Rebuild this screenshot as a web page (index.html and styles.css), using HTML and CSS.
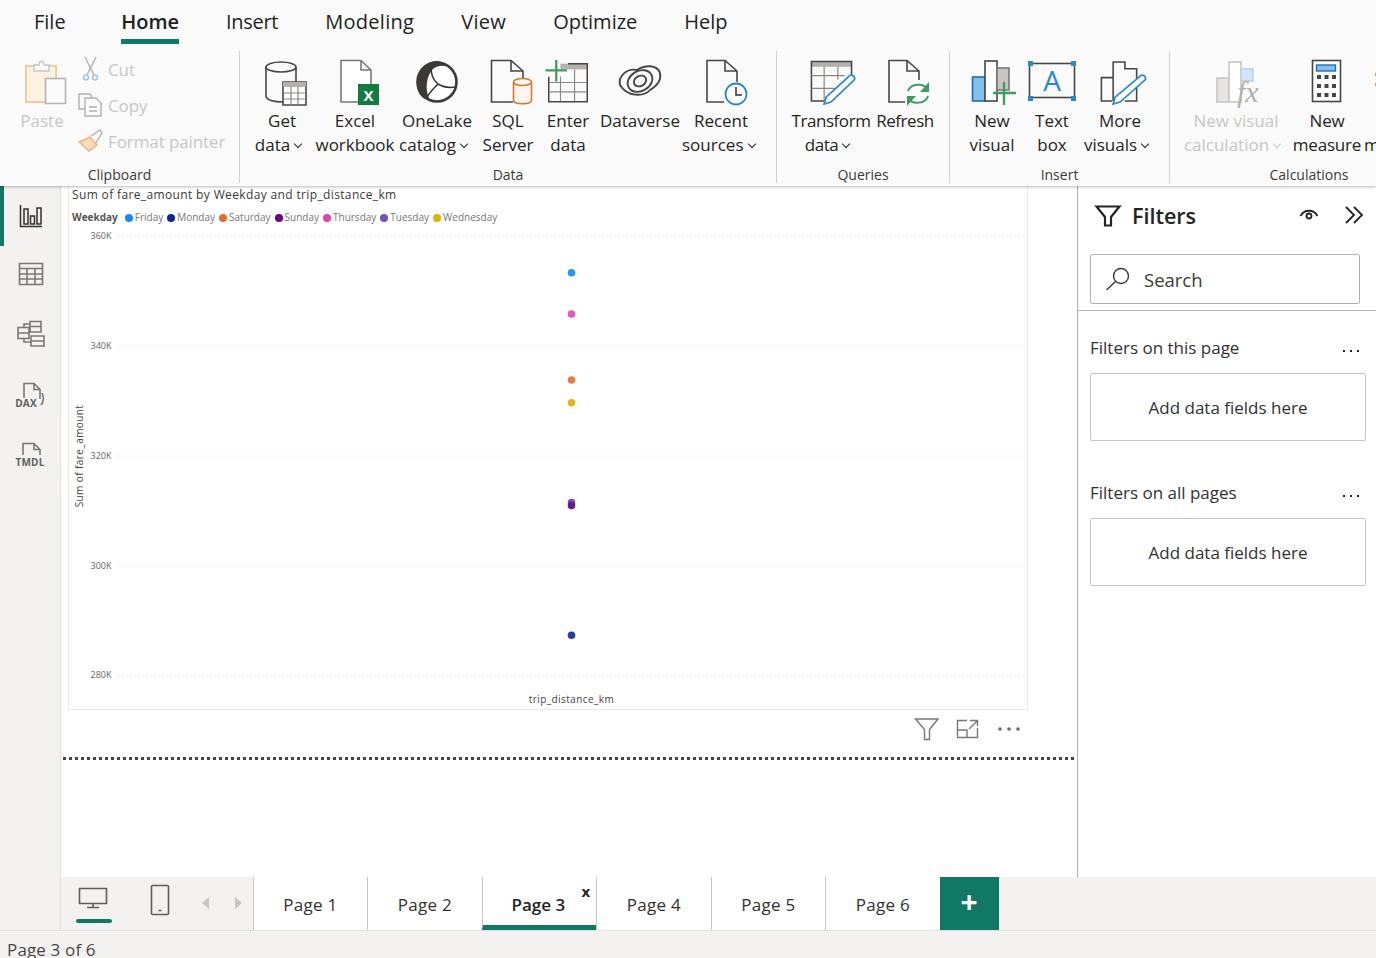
FILE: index.html
```html
<!DOCTYPE html>
<html lang="en">
<head>
  <meta charset="UTF-8">
  <title>Power BI Desktop</title>
  <link rel="stylesheet" href="styles.css">
</head>
<body>
  <header class="ribbon">
    <nav class="tabs">
      <span class="tab tab-file">File</span>
      <span class="tab active">Home</span>
      <span class="tab tab-tight">Insert</span>
      <span class="tab tab-wide">Modeling</span>
      <span class="tab tab-wide">View</span>
      <span class="tab">Optimize</span>
      <span class="tab">Help</span>
    </nav>
    <div class="groups">
      <section class="group group-clipboard">
        <div class="items">
          <div class="item disabled w60">
            <svg class="big" viewBox="12 59 60 46">
              <path class="paste-fill" d="M28 68H54V100H28Z"/>
              <path class="paste-board" d="M34 66H26V102H45M49 66H56V78"/>
              <path class="paste-clip" d="M34 71V65H39C39 60 44 60 44 65H49V71Z"/>
              <rect class="paste-paper" x="45.5" y="78.5" width="20" height="25"/>
            </svg>
            <div class="label">Paste</div>
          </div>
          <div class="small-col">
            <div class="small-row disabled">
              <svg class="small" viewBox="78 56 26 26">
                <path class="gray-line" d="M85 57L94 75M96 57L87 75"/>
                <circle class="blue-line" cx="86" cy="77.500" r="2.500"/>
                <circle class="blue-line" cx="95" cy="77.500" r="2.500"/>
              </svg>
              <span>Cut</span>
            </div>
            <div class="small-row disabled">
              <svg class="small" viewBox="78 92 26 26">
                <path class="gray-line" d="M85 109H79V94H90L92 97"/>
                <path class="gray-line" d="M85 98H96L101 103V116H85Z"/>
                <path class="gray-line" d="M89 107H97M89 111H97"/>
              </svg>
              <span>Copy</span>
            </div>
            <div class="small-row disabled">
              <svg class="small" viewBox="78 129 26 26">
                <path class="brush" d="M79 142L90 137L97 145L89 151Z"/>
                <path class="gray-line" d="M91 136L100 130L102 133L96 143"/>
              </svg>
              <span>Format painter</span>
            </div>
          </div>
        </div>
        <div class="group-name">Clipboard</div>
      </section>

      <section class="group group-data">
        <div class="items">
          <div class="item w64">
            <svg class="big" viewBox="250 59 64 46">
              <path class="ln" d="M266 67V96C266 100 274 102 283 102M296 67V82"/>
              <ellipse class="ln" cx="281" cy="67" rx="15" ry="5"/>
              <path class="ln-w" d="M283 82H306V105H283Z"/>
              <rect class="table-head" x="283" y="82" width="23" height="5"/>
              <path class="ln-thin" d="M283 93H306M283 99H306M291 87V105M298 87V105"/>
            </svg>
            <div class="label">Get<br>data<i class="chev"></i></div>
          </div>
          <div class="item w82">
            <svg class="big" viewBox="314 59 82 46">
              <path class="ln-gray" d="M341 60.5H361L371 70V102H341ZM361 60.5V70H371"/>
              <rect class="xl" x="358" y="84" width="21" height="21"/>
              <text class="xl-x" x="368.5" y="100.5">X</text>
            </svg>
            <div class="label">Excel<br>workbook</div>
          </div>
          <div class="item w82">
            <svg class="big" viewBox="396 59 82 46">
              <circle class="lake-ring" cx="437" cy="82" r="19.500"/>
              <path class="solid" d="M431 62C418 66 414 80 419 93C422 98 425 100 429 98C425 90 426 76 433 69C438 65 445 65 450 68C444 61 437 60 431 62Z"/>
              <path class="ln-dark" d="M431 67C431 75 434 81 438 84C443 87 449 88 455 87M438 84C434 88 430 92 427 97"/>
            </svg>
            <div class="label">OneLake<br>catalog<i class="chev"></i></div>
          </div>
          <div class="item w60">
            <svg class="big" viewBox="478 59 60 46">
              <path class="ln" d="M513 102H491.500V60.500H511L523 71V78M511 60.500V71H523"/>
              <path class="orange" d="M513.500 82V100C513.500 105 531.500 105 531.500 100V82"/>
              <ellipse class="orange" cx="522.500" cy="82" rx="9" ry="3.500"/>
            </svg>
            <div class="label">SQL<br>Server</div>
          </div>
          <div class="item w60">
            <svg class="big" viewBox="538 56 60 49">
              <rect class="table-head" x="560" y="61" width="29" height="6"/>
              <path class="ln" d="M568 61H588.500V101.500H547.500V75"/>
              <path class="ln-thin" d="M548 81H588M548 91H588M560 75V101M575 67V101"/>
              <path class="green-plus" d="M544 68H567M555.500 57V80"/>
            </svg>
            <div class="label">Enter<br>data</div>
          </div>
          <div class="item w84">
            <svg class="big" viewBox="598 59 84 46">
              <path class="ln-round" d="M620 85C618 76 627 68 637 70C644 65 657 64 660 73C662 82 655 87 650 90C644 97 627 97 620 85Z"/>
              <ellipse class="ln-round" cx="640" cy="81" rx="13" ry="10" transform="rotate(-30 640 81)"/>
              <ellipse class="ln-round" cx="640" cy="81" rx="6.500" ry="5" transform="rotate(-30 640 81)"/>
            </svg>
            <div class="label">Dataverse</div>
          </div>
          <div class="item w78">
            <svg class="big" viewBox="682 59 78 46">
              <path class="ln" d="M724 102H707V60.500H725L737 71V82M725 60.500V71H737"/>
              <circle class="clock" cx="736" cy="94" r="10.500"/>
              <path class="ln-dark" d="M736 87V95H742"/>
            </svg>
            <div class="label">Recent<br>sources<i class="chev"></i></div>
          </div>
        </div>
        <div class="group-name">Data</div>
      </section>

      <section class="group group-queries">
        <div class="items">
          <div class="item w84 tight">
            <svg class="big" viewBox="789 59 84 47">
              <rect class="table-head" x="811" y="61" width="41" height="6"/>
              <path class="ln" d="M824 102H811V61.500H852V76"/>
              <path class="ln-thin" d="M811 76H845M811 89H835M824 67V102M838 67V80"/>
              <path class="pencil" d="M849 77C851 74 856 76 855 80L831 103L824 105L826 98Z"/>
            </svg>
            <div class="label">Transform<br>data<i class="chev"></i></div>
          </div>
          <div class="item w64 tight">
            <svg class="big" viewBox="873 59 64 46">
              <path class="ln" d="M905 102H889V60.500H907L919 71V80M907 60.500V71H919"/>
              <path class="refresh" d="M908 91C911 83 924 83 927 89M928 96C926 104 912 105 908 98"/>
              <path class="refresh-tip" d="M929 82V92H920ZM907 106V96H916Z"/>
            </svg>
            <div class="label">Refresh</div>
          </div>
        </div>
        <div class="group-name">Queries</div>
      </section>

      <section class="group group-insert">
        <div class="items">
          <div class="item w60">
            <svg class="big" viewBox="962 59 60 46">
              <rect class="bar-blue" x="972.500" y="77" width="12.500" height="24"/>
              <rect class="bar-white" x="985" y="61" width="12" height="40"/>
              <rect class="bar-gray" x="997" y="68" width="12" height="22"/>
              <path class="green-plus" d="M993 93H1016M1004 82V105"/>
            </svg>
            <div class="label">New<br>visual</div>
          </div>
          <div class="item w60">
            <svg class="big" viewBox="1022 59 60 46">
              <rect class="ln" x="1029.500" y="63.500" width="45" height="34"/>
              <rect class="handle" x="1028" y="61" width="5" height="5"/>
              <rect class="handle" x="1071" y="61" width="5" height="5"/>
              <rect class="handle" x="1028" y="96" width="5" height="5"/>
              <rect class="handle" x="1071" y="96" width="5" height="5"/>
              <text class="box-a" x="1052" y="91">A</text>
            </svg>
            <div class="label">Text<br>box</div>
          </div>
          <div class="item w76">
            <svg class="big" viewBox="1082 59 76 47">
              <path class="ln" d="M1112 102H1101V78H1113M1113 102V62H1125V69H1137V102H1125"/>
              <path class="pencil" d="M1140 77C1142 74 1147 76 1146 80L1120 103L1113 105L1115 98Z"/>
            </svg>
            <div class="label">More<br>visuals<i class="chev"></i></div>
          </div>
        </div>
        <div class="group-name">Insert</div>
      </section>

      <section class="group group-calc">
        <div class="items">
          <div class="item disabled w108">
            <svg class="big" viewBox="1182 59 108 46">
              <rect class="bar-off" x="1217" y="78" width="12" height="24"/>
              <rect class="bar-white-off" x="1229" y="62" width="12" height="40"/>
              <rect class="bar-blue-off" x="1241" y="69" width="12" height="12"/>
              <text class="fx" x="1237" y="102">fx</text>
            </svg>
            <div class="label">New visual<br>calculation<i class="chev"></i></div>
          </div>
          <div class="item w74 measure">
            <svg class="big" viewBox="1290 59 74 46">
              <rect class="ln-w" x="1312.500" y="60.500" width="28" height="41"/>
              <rect class="calc-screen" x="1316.500" y="65" width="19" height="6"/>
              <path class="calc-keys" d="M1317 75h4v4h-4zM1324.500 75h4v4h-4zM1332 75h4v4h-4zM1317 84h4v4h-4zM1324.500 84h4v4h-4zM1332 84h4v4h-4zM1317 93h4v4h-4zM1324.500 93h4v4h-4zM1332 93h4v4h-4z"/>
            </svg>
            <div class="label">New<br>measure</div>
          </div>
          <div class="item w70">
            <svg class="big" viewBox="1364 59 70 46">
              <path class="orange" d="M1376 73V76M1376 83V86"/>
            </svg>
            <div class="label">Quick<br>measure</div>
          </div>
        </div>
        <div class="group-name">Calculations</div>
      </section>
    </div>
  </header>

  <div class="body">
    <aside class="rail">
      <div class="rail-btn selected">
        <svg viewBox="0 0 26 26">
          <path class="rail-dark" d="M2.500 2V23.500H24M6 6H10V21H6ZM12.500 13H16.500V21H12.500ZM19 5H23V21H19Z"/>
        </svg>
      </div>
      <div class="rail-btn">
        <svg viewBox="0 0 26 26">
          <path class="rail-line" d="M1.500 2.500H24.500V23.500H1.500ZM1.500 7.500H24.500M1.500 13H24.500M1.500 18H24.500M9 7.500V23.500M17 7.500V23.500"/>
        </svg>
      </div>
      <div class="rail-btn">
        <svg viewBox="0 0 30 30">
          <path class="rail-line" d="M14 2.500H25V13H14ZM14 7.500H25M15 17H28V27H15ZM15 22H28M2 8.500H13V19.500H2ZM2 14H13M14 13L12 13M8 8.500V5H14M8 19.500V23H15"/>
        </svg>
      </div>
      <div class="rail-btn rail-file rail-dax">
        <svg viewBox="0 0 30 30">
          <path class="rail-line" d="M8 17V2.500H18L24 8.500V18M18 2.500V8.500H24M26 12C28 16 28 20 25 24"/>
        </svg>
        <span class="rail-text">DAX</span>
      </div>
      <div class="rail-btn rail-file">
        <svg viewBox="0 0 30 30">
          <path class="rail-line" d="M7 14V2.500H18L24 8.500V14M18 2.500V8.500H24"/>
        </svg>
        <span class="rail-text">TMDL</span>
      </div>
    </aside>

    <div class="workspace">
      <div class="work-row">
        <main class="canvas">
          <div class="visual">
            <div class="visual-title">Sum of fare_amount by Weekday and trip_distance_km</div>
            <div class="legend">
              <b>Weekday</b>
              <span><i class="dot c-friday"></i>Friday</span>
              <span><i class="dot c-monday"></i>Monday</span>
              <span><i class="dot c-saturday"></i>Saturday</span>
              <span><i class="dot c-sunday"></i>Sunday</span>
              <span><i class="dot c-thursday"></i>Thursday</span>
              <span><i class="dot c-tuesday"></i>Tuesday</span>
              <span><i class="dot c-wednesday"></i>Wednesday</span>
            </div>
            <svg class="plot" viewBox="69 226 958 483">
              <path class="grid" d="M118 236.500H1026M118 346H1026M118 456H1026M118 566H1026M118 675.500H1026"/>
              <text class="tick" x="111.500" y="239">360K</text>
              <text class="tick" x="111.500" y="349">340K</text>
              <text class="tick" x="111.500" y="459">320K</text>
              <text class="tick" x="111.500" y="569">300K</text>
              <text class="tick" x="111.500" y="678">280K</text>
              <text class="axis-name" transform="translate(83 456) rotate(-90)">Sum of fare_amount</text>
              <text class="axis-name" x="571.500" y="703">trip_distance_km</text>
              <circle class="pt-friday" cx="571.500" cy="272.800" r="3.800"/>
              <circle class="pt-thursday" cx="571.500" cy="314" r="3.800"/>
              <circle class="pt-saturday" cx="571.500" cy="380" r="3.800"/>
              <circle class="pt-wednesday" cx="571.500" cy="402.800" r="3.800"/>
              <circle class="pt-tuesday" cx="571.500" cy="502.500" r="3.800"/>
              <circle class="pt-sunday" cx="571.500" cy="505.500" r="3.800"/>
              <circle class="pt-monday" cx="571.500" cy="635.300" r="3.800"/>
            </svg>
          </div>
          <div class="visual-tools">
            <svg class="tool-funnel" viewBox="0 0 26 24">
              <path class="tool-line" d="M1.500 2H24L15.500 12.500V22.500H10.500V12.500Z"/>
            </svg>
            <svg class="tool-focus" viewBox="0 0 24 20">
              <path class="tool-line" d="M11 1.500H1.500V18.500H21.500V9M1.500 11H11V18.500M14 1.500H21.500V7M21 2L13 10"/>
            </svg>
            <svg class="tool-more" viewBox="0 0 24 6">
              <circle class="tool-dot" cx="3" cy="3" r="1.800"/>
              <circle class="tool-dot" cx="12" cy="3" r="1.800"/>
              <circle class="tool-dot" cx="21" cy="3" r="1.800"/>
            </svg>
          </div>
          <div class="page-end"></div>
        </main>

        <aside class="filters">
          <div class="filters-head">
            <svg class="funnel" viewBox="0 0 26 22">
              <path d="M1.500 1.500H24.500L16 12V20.500H10V12Z"/>
            </svg>
            <span class="filters-title">Filters</span>
            <svg class="eye" viewBox="0 0 20 14">
              <path d="M1.500 9C5 2 15 2 18.500 9"/>
              <circle cx="10" cy="9" r="2.500"/>
            </svg>
            <svg class="collapse" viewBox="0 0 20 18">
              <path d="M2 1L10 9L2 17M10 1L18 9L10 17"/>
            </svg>
          </div>
          <div class="search">
            <svg viewBox="0 0 26 26">
              <circle cx="16" cy="10" r="7.500"/>
              <path d="M10.500 15.500L1.500 24"/>
            </svg>
            <span>Search</span>
          </div>
          <div class="filter-section">
            <div class="section-head">
              <span>Filters on this page</span>
              <span class="dots"><i></i><i></i><i></i></span>
            </div>
            <div class="dropzone">Add data fields here</div>
          </div>
          <div class="filter-section">
            <div class="section-head">
              <span>Filters on all pages</span>
              <span class="dots"><i></i><i></i><i></i></span>
            </div>
            <div class="dropzone">Add data fields here</div>
          </div>
        </aside>
      </div>

      <div class="pagebar">
        <div class="view-tools">
          <div class="view-btn on">
            <svg class="desktop" viewBox="0 0 30 22">
              <path d="M1.500 1.500H28.500V16.500H1.500ZM15 16.500V20.500M9 20.500H21"/>
            </svg>
          </div>
          <div class="view-btn view-phone">
            <svg class="phone" viewBox="0 0 20 32">
              <path d="M2.500 1.500H17.500C18 1.500 18.500 2 18.500 2.500V29.500C18.500 30 18 30.500 17.500 30.500H2.500C2 30.500 1.500 30 1.500 29.500V2.500C1.500 2 2 1.500 2.500 1.500ZM8.500 26.500H11.500"/>
            </svg>
          </div>
          <i class="arrow arrow-left"></i>
          <i class="arrow arrow-right"></i>
        </div>
        <div class="page-tab">Page 1</div>
        <div class="page-tab">Page 2</div>
        <div class="page-tab current">Page 3<span class="close">x</span></div>
        <div class="page-tab">Page 4</div>
        <div class="page-tab">Page 5</div>
        <div class="page-tab">Page 6</div>
        <div class="add-page">+</div>
      </div>
    </div>
  </div>

  <footer class="status">Page 3 of 6</footer>
</body>
</html>
```

FILE: styles.css
```css
* {
  box-sizing: border-box;
}
html, body {
  height: 100%;
}
body {
  margin: 0;
  height: 958px;
  overflow: hidden;
  display: flex;
  flex-direction: column;
  font-family: 'Open Sans', 'Noto Sans', sans-serif;
  color: #252423;
  background: #fff;
}
svg {
  display: block;
  overflow: visible;
}

/* ribbon */
.ribbon {
  height: 186px;
  flex: none;
  background: #fafafa;
  box-shadow: 0 1px 3px rgba(0, 0, 0, 0.28);
  position: relative;
  z-index: 2;
  overflow: hidden;
}
.tabs {
  display: flex;
  gap: 47px;
  height: 44px;
  margin: 0 0 7px 34px;
  font-size: 20px;
  color: #201f1e;
}
.tab {
  padding-top: 8px;
  line-height: 28px;
  height: 44px;
}
.tab-file {
  margin-right: 8.5px;
}
.tab-tight {
  letter-spacing: -0.3px;
}
.tab-wide {
  letter-spacing: 0.3px;
}
.tab.active {
  font-weight: 600;
  border-bottom: 5px solid #117865;
}
.groups {
  display: flex;
  height: 132px;
}
.group {
  flex: none;
  display: flex;
  flex-direction: column;
  justify-content: space-between;
  border-right: 1px solid #d2d0ce;
  padding-top: 8px;
}
.group-clipboard { width: 240px; padding-left: 12px; }
.group-data { width: 537px; padding-left: 10px; }
.group-queries { width: 173px; padding-left: 12px; }
.group-insert { width: 220px; padding-left: 12px; }
.group-calc { width: 278px; padding-left: 12px; border-right: 0; }
.items {
  display: flex;
}
.item {
  flex: none;
  font-size: 17px;
  line-height: 24px;
  text-align: center;
  white-space: nowrap;
}
.tight {
  letter-spacing: -0.45px;
}
.measure {
  letter-spacing: -0.2px;
}
.w60 { width: 60px; }
.w64 { width: 64px; }
.w70 { width: 70px; }
.w74 { width: 74px; }
.w76 { width: 76px; }
.w78 { width: 78px; }
.w82 { width: 82px; }
.w84 { width: 84px; }
.w108 { width: 108px; }
.big {
  width: 100%;
  height: 46px;
}
.label {
  margin-top: 4px;
}
.disabled {
  color: #c8c6c4;
}
.chev {
  display: inline-block;
  width: 6px;
  height: 6px;
  margin: 0 8px 4px 5px;
  border-right: 1.5px solid currentColor;
  border-bottom: 1.5px solid currentColor;
  transform: rotate(45deg);
}
.group-name {
  font-size: 14px;
  line-height: 20px;
  text-align: center;
  color: #3b3a39;
  margin-bottom: -2px;
  padding-right: 12px;
}
.group-data .group-name { padding-right: 10px; }
.small-col {
  margin-top: -8px;
  margin-left: 6px;
}
.small-row {
  height: 36.3px;
  display: flex;
  align-items: center;
  gap: 4px;
  font-size: 17px;
  letter-spacing: -0.1px;
  white-space: nowrap;
}
.small {
  width: 26px;
  height: 26px;
  flex: none;
}

/* ribbon icon strokes */
.ln { fill: none; stroke: #484644; stroke-width: 1.6; }
.ln-w { fill: #fff; stroke: #484644; stroke-width: 1.6; }
.ln-gray { fill: #fff; stroke: #7a7874; stroke-width: 1.6; }
.ln-thin { fill: none; stroke: #8a8886; stroke-width: 1.2; }
.ln-dark { fill: none; stroke: #333; stroke-width: 1.5; }
.ln-round { fill: none; stroke: #484644; stroke-width: 1.9; }
.table-head { fill: #b3b0ad; }
.xl { fill: #107c41; }
.xl-x { fill: #fff; font: 700 15px 'Open Sans', sans-serif; text-anchor: middle; }
.solid { fill: #3b3a39; }
.lake-ring { fill: #fff; stroke: #3b3a39; stroke-width: 2.6; }
.orange { fill: #fdf6ee; stroke: #d9782d; stroke-width: 1.6; }
.green-plus { fill: none; stroke: #3f9c62; stroke-width: 2.4; }
.clock { fill: #fff; stroke: #2b88c8; stroke-width: 1.8; }
.pencil { fill: #fff; stroke: #2b88d8; stroke-width: 1.8; }
.refresh { fill: none; stroke: #3f9c62; stroke-width: 2; }
.refresh-tip { fill: #3f9c62; }
.bar-blue { fill: #83beec; stroke: #1e6fb0; stroke-width: 1.6; }
.bar-white { fill: #fff; stroke: #484644; stroke-width: 1.6; }
.bar-gray { fill: #c8c6c4; stroke: #7a7874; stroke-width: 1.6; }
.handle { fill: #2b88c8; }
.box-a { fill: #2b88d8; font: 400 28px 'Open Sans', sans-serif; text-anchor: middle; }
.bar-off { fill: #e6e5e3; stroke: #c8c6c4; stroke-width: 1.6; }
.bar-white-off { fill: #fff; stroke: #c8c6c4; stroke-width: 1.6; }
.bar-blue-off { fill: #d3e5f5; stroke: #b8d3ea; stroke-width: 1.6; }
.fx { fill: #b3b0ad; font: italic 400 30px 'Liberation Serif', serif; }
.calc-screen { fill: #83beec; stroke: #1e6fb0; stroke-width: 1.4; }
.calc-keys { fill: #484644; }
.paste-board { fill: none; stroke: #f3c998; stroke-width: 2; }
.paste-fill { fill: #fdf1e0; }
.paste-clip { fill: #fafafa; stroke: #c8c6c4; stroke-width: 1.4; }
.paste-paper { fill: #fafafa; stroke: #b3b0ad; stroke-width: 1.5; }
.gray-line { fill: none; stroke: #b3b0ad; stroke-width: 1.4; }
.blue-line { fill: none; stroke: #9cc6e6; stroke-width: 1.4; }
.brush { fill: #f7dcbc; stroke: #f0b27a; stroke-width: 1.4; }

/* page body */
.body {
  flex: 1;
  min-height: 0;
  display: flex;
}
.rail {
  width: 61px;
  flex: none;
  background: #f3f2f1;
  border-right: 1px solid #e1dfdd;
}
.rail-btn {
  height: 60px;
  padding-left: 1px;
  display: flex;
  align-items: center;
  justify-content: center;
  position: relative;
}
.rail-btn:nth-child(2) {
  height: 56px;
}
.rail-btn:nth-child(3) {
  height: 64px;
}
.rail-btn svg {
  width: 26px;
  height: 26px;
}
.rail-btn.selected {
  border-left: 4px solid #117865;
  padding: 0 3px 0 0;
}
.rail-btn:nth-child(3) svg {
  width: 30px;
  height: 30px;
}
.rail-file svg {
  width: 30px;
  height: 30px;
}
.rail-text {
  position: absolute;
  left: 0;
  right: 0;
  top: 30px;
  text-align: center;
  font-size: 10px;
  line-height: 12px;
  font-weight: 700;
  color: #605e5c;
  letter-spacing: 0.2px;
  background: #f3f2f1;
}
.rail-dax .rail-text {
  top: 31px;
  left: 15px;
  right: auto;
  width: 22px;
  background: none;
}
.rail-dark { fill: none; stroke: #323130; stroke-width: 1.5; }
.rail-line { fill: none; stroke: #7a7874; stroke-width: 1.6; }

.workspace {
  flex: 1;
  min-width: 0;
  display: flex;
  flex-direction: column;
}
.work-row {
  flex: 1;
  min-height: 0;
  display: flex;
}

/* report canvas */
.canvas {
  flex: 1;
  min-width: 0;
  padding-left: 7px;
  background: #fff;
}
.visual {
  width: 960px;
  height: 524px;
  border: 1px solid #e8e8e8;
  border-top: 0;
  display: flex;
  flex-direction: column;
}
.visual-title {
  font-size: 12px;
  line-height: 18px;
  letter-spacing: 0.36px;
  color: #3b3a39;
  padding: 0 0 0 3px;
}
.legend {
  display: flex;
  align-items: center;
  gap: 4px;
  height: 22px;
  padding: 4px 0 0 3px;
  font-size: 10px;
  color: #777;
  white-space: nowrap;
}
.legend b {
  color: #555;
  margin-right: 3px;
}
.dot {
  display: inline-block;
  width: 8px;
  height: 8px;
  border-radius: 50%;
  margin-right: 2px;
  vertical-align: -1px;
}
.c-friday { background: #118dff; }
.c-monday { background: #12239e; }
.c-saturday { background: #e66c37; }
.c-sunday { background: #6b007b; }
.c-thursday { background: #e044a7; }
.c-tuesday { background: #744ec2; }
.c-wednesday { background: #d9b300; }
.plot {
  width: 958px;
  height: 483px;
}
.grid {
  fill: none;
  stroke: #d0d0d0;
  stroke-width: 1;
  stroke-dasharray: 1 3;
}
.tick {
  fill: #666;
  font-size: 9px;
  text-anchor: end;
}
.axis-name {
  fill: #444;
  font-size: 10px;
  letter-spacing: 0.42px;
  text-anchor: middle;
}
.pt-friday { fill: #2a93f5; }
.pt-thursday { fill: #e25ab8; }
.pt-saturday { fill: #e87c4c; }
.pt-wednesday { fill: #dcb81d; }
.pt-tuesday { fill: #744ec2; }
.pt-sunday { fill: #6b1a8b; }
.pt-monday { fill: #2b3ba5; }

.visual-tools {
  width: 960px;
  height: 38px;
  padding: 0 7px 0 0;
  display: flex;
  align-items: center;
  justify-content: flex-end;
}
.tool-funnel { width: 26px; height: 24px; margin-right: 16px; }
.tool-focus { width: 24px; height: 20px; margin-right: 17px; }
.tool-more { width: 24px; height: 6px; }
.tool-line { fill: none; stroke: #777; stroke-width: 1.4; }
.tool-dot { fill: #666; }
.page-end {
  margin: 9px 0 0 -5px;
  width: 1011px;
  border-top: 3px dotted #444;
}

/* filters pane */
.filters {
  width: 299px;
  flex: none;
  border-left: 1px solid #b3b0ad;
  background: #fff;
}
.filters-head {
  height: 60px;
  display: flex;
  align-items: center;
  padding: 0 12px 0 17px;
}
.funnel {
  width: 26px;
  height: 22px;
  margin-right: 11px;
}
.funnel path {
  fill: none;
  stroke: #252423;
  stroke-width: 2.2;
}
.filters-title {
  font-size: 21.5px;
  font-weight: 600;
  padding-bottom: 2px;
  flex: 1;
}
.eye {
  width: 20px;
  height: 14px;
  margin: 0 25px 4px 0;
}
.eye path, .eye circle {
  fill: none;
  stroke: #252423;
  stroke-width: 1.8;
}
.collapse {
  width: 20px;
  height: 18px;
  margin-bottom: 2px;
}
.collapse path {
  fill: none;
  stroke: #252423;
  stroke-width: 1.8;
}
.search {
  height: 50px;
  margin: 8px 16px 6px 12px;
  border: 1px solid #b3b0ad;
  border-radius: 2px;
  display: flex;
  align-items: center;
  gap: 13px;
  padding-left: 14px;
  font-size: 18.5px;
  color: #3b3a39;
}
.search svg {
  width: 26px;
  height: 26px;
}
.search circle, .search path {
  fill: none;
  stroke: #3b3a39;
  stroke-width: 1.4;
}
.filter-section {
  padding: 24px 10px 15px 12px;
}
.search + .filter-section {
  border-top: 1px solid #b3b0ad;
}
.section-head {
  display: flex;
  justify-content: space-between;
  align-items: center;
  height: 26px;
  padding-bottom: 2px;
  margin-bottom: 12px;
  font-size: 17px;
  color: #323130;
}
.dots {
  display: flex;
  gap: 5px;
  padding: 8px 7px 0 0;
}
.dots i {
  width: 2px;
  height: 2px;
  background: #252423;
}
.dropzone {
  height: 68px;
  border: 1px solid #c8c6c4;
  border-radius: 2px;
  display: flex;
  align-items: center;
  justify-content: center;
  font-size: 17px;
  color: #323130;
}

/* page tabs */
.pagebar {
  height: 53px;
  flex: none;
  display: flex;
  background: #f3f2f1;
}
.view-tools {
  width: 191.6px;
  flex: none;
  position: relative;
  display: flex;
}
.view-btn {
  width: 64px;
  padding-top: 7px;
  display: flex;
  justify-content: center;
}
.view-btn:first-child {
  position: relative;
}
.view-phone {
  padding-left: 6px;
}
.view-btn.on::after {
  content: "";
  position: absolute;
  left: 15px;
  width: 36px;
  top: 42px;
  height: 3.5px;
  border-radius: 2px;
  background: #117865;
}
.desktop {
  width: 30px;
  height: 22px;
  margin-top: 3px;
}
.phone {
  width: 20px;
  height: 32px;
}
.desktop path, .phone path {
  fill: none;
  stroke: #605e5c;
  stroke-width: 1.6;
}
.arrow {
  position: absolute;
  top: 20px;
  width: 0;
  height: 0;
  border-top: 6px solid transparent;
  border-bottom: 6px solid transparent;
}
.arrow-left {
  left: 141px;
  border-right: 7px solid #c8c6c4;
}
.arrow-right {
  left: 174px;
  border-left: 7px solid #c8c6c4;
}
.page-tab {
  width: 114.5px;
  flex: none;
  position: relative;
  background: #fff;
  border-left: 1px solid #c8c6c4;
  display: flex;
  align-items: center;
  justify-content: center;
  padding-top: 2px;
  font-size: 17px;
  letter-spacing: 0.3px;
  color: #323130;
}
.page-tab.current {
  font-weight: 600;
  letter-spacing: 0;
  color: #252423;
  border-bottom: 5px solid #117865;
  padding: 7px 2px 0 0;
}
.close {
  position: absolute;
  right: 6px;
  top: 4px;
  font-size: 15px;
  line-height: 20px;
  font-weight: 700;
}
.add-page {
  width: 59px;
  flex: none;
  background: #117865;
  color: #fff;
  text-align: center;
  font-size: 30px;
  font-weight: 700;
  line-height: 50px;
}
.status {
  height: 28px;
  flex: none;
  background: #f3f2f1;
  border-top: 1px solid #e1dfdd;
  padding: 7px 0 0 7px;
  font-size: 17px;
  letter-spacing: 0.15px;
  line-height: 24px;
  color: #484644;
  overflow: hidden;
}
```
